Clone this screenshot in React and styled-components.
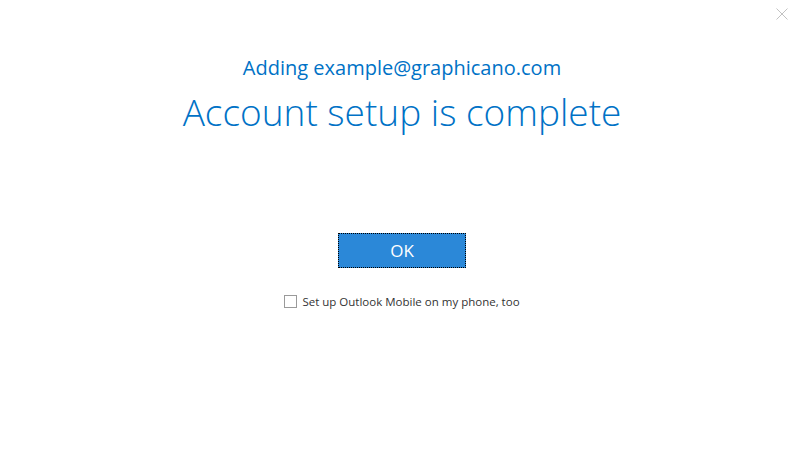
import React from 'react'
import styled, { createGlobalStyle } from 'styled-components'

const GlobalStyle = createGlobalStyle`
  html, body {
    margin: 0;
    padding: 0;
    background: #ffffff;
  }
  body {
    font-family: 'Open Sans', 'Noto Sans', sans-serif;
  }
`

const Dialog = styled.div`
  position: relative;
  width: 804px;
  height: 471px;
  background: #ffffff;
  display: flex;
  flex-direction: column;
  align-items: center;
  box-sizing: border-box;
  padding-top: 54px;
`

const CloseButton = styled.button`
  position: absolute;
  top: 7px;
  right: 15px;
  width: 14px;
  height: 14px;
  padding: 0;
  border: none;
  background: transparent;
  display: flex;
  align-items: center;
  justify-content: center;
`

const Subtitle = styled.div`
  font-size: 20px;
  font-weight: 400;
  color: #0072c6;
  line-height: 28px;
`

const Title = styled.h1`
  margin: 5px 0 0;
  font-size: 37px;
  font-weight: 300;
  color: #0072c6;
  line-height: 50px;
`

const OkButton = styled.button`
  margin-top: 96px;
  width: 128px;
  height: 35px;
  background: #2b88d8;
  color: #ffffff;
  font-family: 'Open Sans', sans-serif;
  font-size: 17px;
  border: 1px dotted #000000;
  outline: none;
`

const CheckRow = styled.label`
  margin-top: 26px;
  display: flex;
  align-items: center;
  gap: 5px;
  font-size: 11.5px;
  color: #333333;
`

const Box = styled.span`
  width: 11px;
  height: 11px;
  border: 1px solid #9a9a9a;
  background: #ffffff;
`

export default function App() {
  return (
    <>
      <GlobalStyle />
      <Dialog>
        <CloseButton aria-label="Close">
          <svg width="12" height="12" viewBox="0 0 12 12">
            <path d="M0.5 0.5 L11.5 11.5 M11.5 0.5 L0.5 11.5" stroke="#c2c2c2" strokeWidth="1" fill="none" />
          </svg>
        </CloseButton>
        <Subtitle>Adding example@graphicano.com</Subtitle>
        <Title>Account setup is complete</Title>
        <OkButton>OK</OkButton>
        <CheckRow>
          <Box />
          Set up Outlook Mobile on my phone, too
        </CheckRow>
      </Dialog>
    </>
  )
}
